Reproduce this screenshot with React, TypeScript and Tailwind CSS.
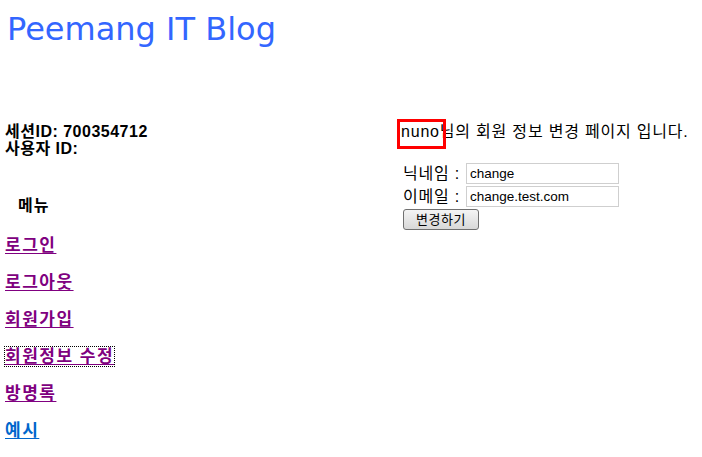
import * as React from "react"

const menu = [
  { label: "로그인", visited: true },
  { label: "로그아웃", visited: true },
  { label: "회원가입", visited: true },
  { label: "회원정보 수정", visited: true, focused: true },
  { label: "방명록", visited: true },
  { label: "예시", visited: false },
]

const font = "font-['Liberation_Sans','Noto_Sans_CJK_KR',sans-serif]"

export default function App() {
  return (
    <div className={`min-h-screen bg-white text-black ${font}`}>
      <h1 className="pl-[7px] pt-[10px] font-['DejaVu_Sans',sans-serif] text-[32px] font-normal leading-[38px] text-[#3366ff]">
        Peemang IT Blog
      </h1>

      <div className="mt-[75px] flex">
        {/* left column */}
        <div className="w-[397px] shrink-0 pl-[5px]">
          <div className="text-[16px] font-bold leading-[17px] tracking-[0.5px]">
            <p>세션ID: 700354712</p>
            <p>사용자 ID:</p>
          </div>

          <p className="mt-[40px] pl-[13px] text-[16px] font-bold leading-[18px] tracking-[1px]">메뉴</p>

          <ul className="mt-[20px] flex flex-col gap-[16px]">
            {menu.map((item) => (
              <li key={item.label} className="leading-[21px]">
                <a
                  href="#"
                  className={
                    "text-[17px] font-bold tracking-[1.5px] underline underline-offset-2 " +
                    (item.visited ? "text-[#800080]" : "text-[#0066cc]") +
                    (item.focused ? " outline-1 outline-dotted outline-black" : "")
                  }
                >
                  {item.label}
                </a>
              </li>
            ))}
          </ul>
        </div>

        {/* right column */}
        <div className="relative pl-[4px]">
          <p className="text-[16px] leading-[17px] tracking-[0.8px]">nuno님의 회원 정보 변경 페이지 입니다.</p>
          <div className="pointer-events-none absolute left-0 top-[-4px] h-[30px] w-[49px] border-[3px] border-[#ff0000]" />

          <form className="mt-[23px] flex flex-col gap-[2px] pl-[2px]" onSubmit={(e) => e.preventDefault()}>
            <div className="flex h-[21px] items-center text-[16px] leading-[21px] tracking-[0.8px]">
              <span className="w-[63px]">닉네임 :</span>
              <input
                defaultValue="change"
                className="h-[21px] w-[153px] border border-[#cfcfcf] px-[3px] text-[13.5px] tracking-normal outline-none"
              />
            </div>
            <div className="flex h-[21px] items-center text-[16px] leading-[21px] tracking-[0.8px]">
              <span className="w-[63px]">이메일 :</span>
              <input
                defaultValue="change.test.com"
                className="h-[21px] w-[153px] border border-[#cfcfcf] px-[3px] text-[13.5px] tracking-normal outline-none"
              />
            </div>
            <button
              type="submit"
              className="h-[21px] w-[76px] rounded-[3px] border border-[#707070] bg-gradient-to-b from-[#f4f4f4] to-[#d8d8d8] text-[13px] leading-none tracking-[0.5px]"
            >
              변경하기
            </button>
          </form>
        </div>
      </div>
    </div>
  )
}
